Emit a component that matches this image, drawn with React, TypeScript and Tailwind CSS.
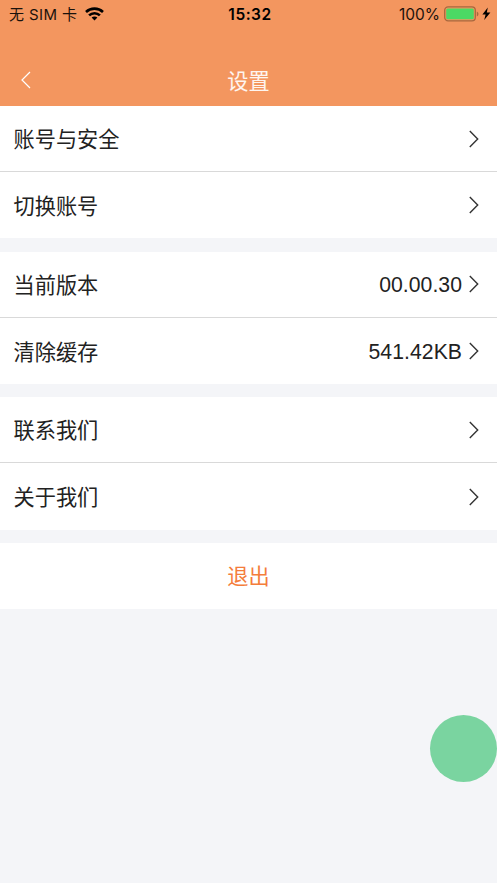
type Item = {
  label: string;
  value?: string;
};

const groups: Item[][] = [
  [{ label: "账号与安全" }, { label: "切换账号" }],
  [
    { label: "当前版本", value: "00.00.30" },
    { label: "清除缓存", value: "541.42KB" },
  ],
  [{ label: "联系我们" }, { label: "关于我们" }],
];

function StatusBar() {
  return (
    <div className="grid h-7 grid-cols-[1fr_auto_1fr] items-center pl-[9px] pr-1.5 font-['Inter','Noto_Sans_CJK_SC',sans-serif] text-[15.5px] text-[#1b120c]">
      <div className="flex items-center">
        <span className="whitespace-pre pt-px text-[15px] leading-[27px] tracking-[0.4px]">无 SIM 卡</span>
        <svg className="ml-2 h-[14px] w-[19px]" viewBox="0 0 19 14" fill="none" stroke="#000" strokeWidth="2.6">
          <path d="M1 5C5.8 0.5 13.2 0.5 18 5" />
          <path d="M4.1 8.4C7.1 5.5 11.9 5.5 14.9 8.4" />
          <path d="M9.5 13.4L6.6 10.5C8.2 9 10.8 9 12.4 10.5Z" fill="#000" stroke="none" />
        </svg>
      </div>
      <span className="pt-px text-[15.5px] font-semibold leading-[27px] tracking-[0.5px] text-black">15:32</span>
      <div className="flex items-center justify-end">
        <span className="pt-px leading-[27px]">100%</span>
        <svg className="ml-1 h-4 w-[47px]" viewBox="0 0 47 16">
          <rect x="0.7" y="0.9" width="30.6" height="14" rx="3.4" fill="none" stroke="#a7683f" strokeWidth="1.3" />
          <rect x="2.2" y="2.5" width="27.6" height="10.8" rx="1.5" fill="#4cd964" />
          <path d="M32.8 5.4C35 6.2 35 9.6 32.8 10.4Z" fill="#a7683f" />
          <path d="M43.8 1.4L38.4 8.6H41.6L40.2 14L46.4 6.6H42.8Z" fill="#000" />
        </svg>
      </div>
    </div>
  );
}

function Chevron() {
  return (
    <svg className="h-[18px] w-[10px]" viewBox="0 0 10 18" fill="none" stroke="#333" strokeWidth="1.4">
      <path d="M0.8 1L8.7 9L0.8 17" />
    </svg>
  );
}

export default function App() {
  return (
    <div className="relative min-h-screen bg-[#f4f5f8] font-['Liberation_Sans','Noto_Sans_CJK_SC',sans-serif] text-[21.2px] text-[#222]">
      <header className="h-[106px] bg-[#f3965f]">
        <StatusBar />
        <div className="grid h-[78px] grid-cols-[1fr_auto_1fr] items-center pt-[26px] text-white">
          <svg className="ml-[21px] h-[18px] w-[10px]" viewBox="0 0 10 18" fill="none" stroke="currentColor" strokeWidth="1.2">
            <path d="M9 1L1 9L9 17" />
          </svg>
          <h1 className="pt-[3px] text-white/90">设置</h1>
        </div>
      </header>

      <main className="flex flex-col gap-[13.25px]">
        {groups.map((group, index) => (
          <section key={index} className="divide-y divide-[#d9d9d9] bg-white">
            {group.map((item) => (
              <div key={item.label} className="flex h-[66.2px] items-center justify-between pl-[13.5px] pr-[18px]">
                <span className="pt-[3px]">{item.label}</span>
                <div className="flex items-center gap-[7px]">
                  {item.value && <span className="pt-0.5 tracking-[0.05px]">{item.value}</span>}
                  <Chevron />
                </div>
              </div>
            ))}
          </section>
        ))}
        <button className="h-[66px] bg-white pt-[3px] text-[#f47d3b]">退出</button>
      </main>

      <div className="absolute right-0 top-[715px] size-[67px] rounded-full bg-[#7ad4a0]" />
    </div>
  );
}
